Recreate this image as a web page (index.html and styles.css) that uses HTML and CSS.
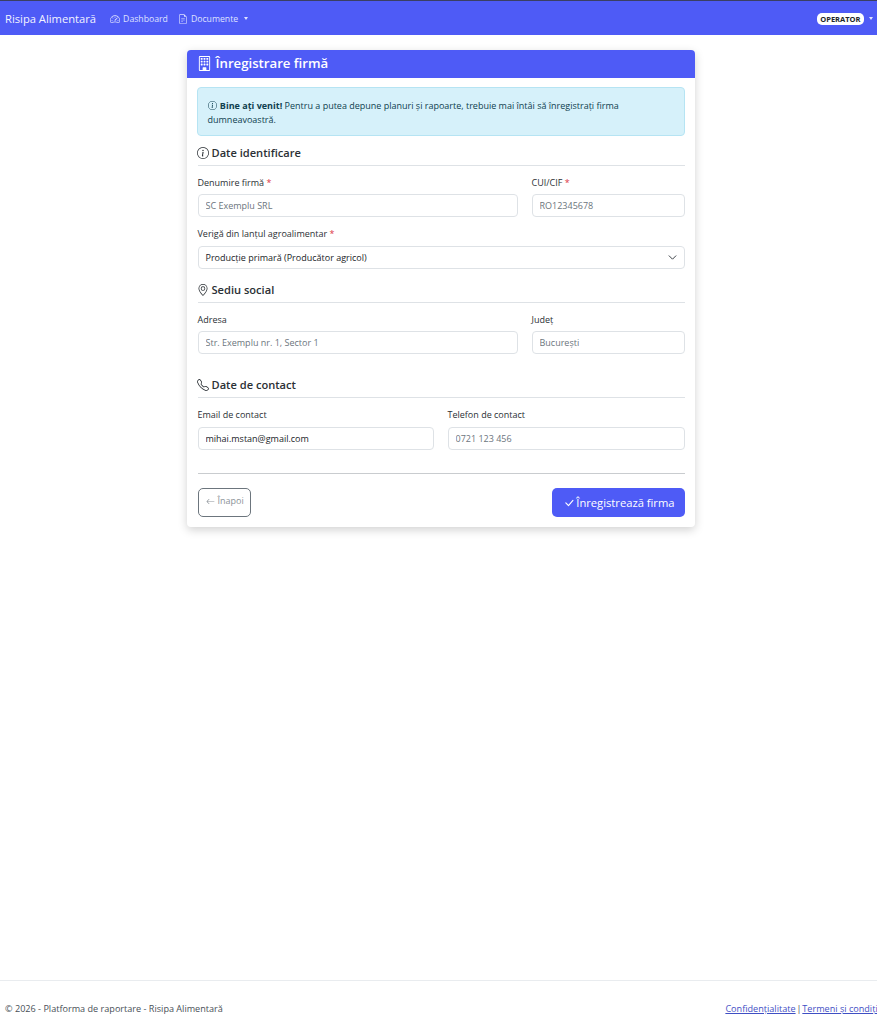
FILE: index.html
```html
<!DOCTYPE html>
<html lang="ro">
<head>
    <meta charset="UTF-8">
    <meta name="viewport" content="width=device-width, initial-scale=1.0">
    <title>Înregistrare firmă</title>
    <link rel="stylesheet" href="styles.css">
</head>
<body>
    <nav class="navbar">
        <a class="brand" href="#">Risipa Alimentară</a>
        <a class="nav-link" href="#">
            <svg class="nav-icon" viewBox="0 0 16 16" fill="currentColor"><path d="M8 4a.5.5 0 0 1 .5.5V6a.5.5 0 0 1-1 0V4.5A.5.5 0 0 1 8 4M3.732 5.732a.5.5 0 0 1 .707 0l.915.914a.5.5 0 1 1-.708.708l-.914-.915a.5.5 0 0 1 0-.707M2 10a.5.5 0 0 1 .5-.5h1.586a.5.5 0 0 1 0 1H2.5A.5.5 0 0 1 2 10m9.5 0a.5.5 0 0 1 .5-.5h1.5a.5.5 0 0 1 0 1H12a.5.5 0 0 1-.5-.5m.754-4.246a.39.39 0 0 0-.527-.02L7.547 9.31a.91.91 0 1 0 1.302 1.258l3.434-4.297a.39.39 0 0 0-.029-.518z"/><path fill-rule="evenodd" d="M0 10a8 8 0 1 1 15.547 2.661c-.442 1.253-1.845 1.602-2.932 1.25C11.309 13.488 9.475 13 8 13c-1.474 0-3.31.488-4.615.911-1.087.352-2.49.003-2.932-1.25A8 8 0 0 1 0 10m8-7a7 7 0 0 0-6.603 9.329c.203.575.923.876 1.68.63C4.397 12.533 6.358 12 8 12s3.604.532 4.923.96c.757.245 1.477-.056 1.68-.631A7 7 0 0 0 8 3"/></svg>
            Dashboard
        </a>
        <a class="nav-link" href="#">
            <svg class="nav-icon" viewBox="0 0 16 16" fill="currentColor"><path d="M5.5 7a.5.5 0 0 0 0 1h5a.5.5 0 0 0 0-1zM5 9.5a.5.5 0 0 1 .5-.5h5a.5.5 0 0 1 0 1h-5a.5.5 0 0 1-.5-.5m0 2a.5.5 0 0 1 .5-.5h2a.5.5 0 0 1 0 1h-2a.5.5 0 0 1-.5-.5"/><path d="M9.5 0H4a2 2 0 0 0-2 2v12a2 2 0 0 0 2 2h8a2 2 0 0 0 2-2V4.5zm0 1v2A1.5 1.5 0 0 0 11 4.5h2V14a1 1 0 0 1-1 1H4a1 1 0 0 1-1-1V2a1 1 0 0 1 1-1z"/></svg>
            Documente
            <span class="caret"></span>
        </a>
        <div class="nav-user">
            <span class="role-badge">OPERATOR</span>
            <span class="caret"></span>
        </div>
    </nav>

    <main class="page">
        <section class="card">
            <h1 class="card-header">
                <svg class="header-icon" viewBox="0 0 16 16" fill="currentColor"><path d="M4 2.5a.5.5 0 0 1 .5-.5h1a.5.5 0 0 1 .5.5v1a.5.5 0 0 1-.5.5h-1a.5.5 0 0 1-.5-.5zm3 0a.5.5 0 0 1 .5-.5h1a.5.5 0 0 1 .5.5v1a.5.5 0 0 1-.5.5h-1a.5.5 0 0 1-.5-.5zm3.5-.5a.5.5 0 0 0-.5.5v1a.5.5 0 0 0 .5.5h1a.5.5 0 0 0 .5-.5v-1a.5.5 0 0 0-.5-.5zM4 5.5a.5.5 0 0 1 .5-.5h1a.5.5 0 0 1 .5.5v1a.5.5 0 0 1-.5.5h-1a.5.5 0 0 1-.5-.5zM7.5 5a.5.5 0 0 0-.5.5v1a.5.5 0 0 0 .5.5h1a.5.5 0 0 0 .5-.5v-1a.5.5 0 0 0-.5-.5zm2.5.5a.5.5 0 0 1 .5-.5h1a.5.5 0 0 1 .5.5v1a.5.5 0 0 1-.5.5h-1a.5.5 0 0 1-.5-.5zM4.5 8a.5.5 0 0 0-.5.5v1a.5.5 0 0 0 .5.5h1a.5.5 0 0 0 .5-.5v-1a.5.5 0 0 0-.5-.5zm2.5.5a.5.5 0 0 1 .5-.5h1a.5.5 0 0 1 .5.5v1a.5.5 0 0 1-.5.5h-1a.5.5 0 0 1-.5-.5zm3.5-.5a.5.5 0 0 0-.5.5v1a.5.5 0 0 0 .5.5h1a.5.5 0 0 0 .5-.5v-1a.5.5 0 0 0-.5-.5z"/><path d="M2 1a1 1 0 0 1 1-1h10a1 1 0 0 1 1 1v14a1 1 0 0 1-1 1H3a1 1 0 0 1-1-1zm11 0H3v14h3v-2.5a.5.5 0 0 1 .5-.5h3a.5.5 0 0 1 .5.5V15h3z"/></svg>
                Înregistrare firmă
            </h1>
            <div class="card-body">
                <div class="alert">
                    <p class="alert-text"><svg class="alert-icon" viewBox="0 0 16 16" fill="currentColor"><path d="M8 15A7 7 0 1 1 8 1a7 7 0 0 1 0 14m0 1A8 8 0 1 0 8 0a8 8 0 0 0 0 16"/><path d="m8.93 6.588-2.29.287-.082.38.45.083c.294.07.352.176.288.469l-.738 3.468c-.194.897.105 1.319.808 1.319.545 0 1.178-.252 1.465-.598l.088-.416c-.2.176-.492.246-.686.246-.275 0-.375-.193-.304-.533zM9 4.5a1 1 0 1 1-2 0 1 1 0 0 1 2 0"/></svg> <strong>Bine ați venit!</strong> Pentru a putea depune planuri și rapoarte, trebuie mai întâi să înregistrați firma dumneavoastră.</p>
                </div>

                <h2 class="section-title">
                    <svg class="section-icon" viewBox="0 0 16 16" fill="currentColor"><path d="M8 15A7 7 0 1 1 8 1a7 7 0 0 1 0 14m0 1A8 8 0 1 0 8 0a8 8 0 0 0 0 16"/><path d="m8.93 6.588-2.29.287-.082.38.45.083c.294.07.352.176.288.469l-.738 3.468c-.194.897.105 1.319.808 1.319.545 0 1.178-.252 1.465-.598l.088-.416c-.2.176-.492.246-.686.246-.275 0-.375-.193-.304-.533zM9 4.5a1 1 0 1 1-2 0 1 1 0 0 1 2 0"/></svg>
                    Date identificare
                </h2>
                <div class="form-row wide-narrow">
                    <div class="field">
                        <label>Denumire firmă <span class="required">*</span></label>
                        <input class="control" type="text" placeholder="SC Exemplu SRL">
                    </div>
                    <div class="field">
                        <label>CUI/CIF <span class="required">*</span></label>
                        <input class="control" type="text" placeholder="RO12345678">
                    </div>
                </div>
                <div class="field field-full">
                    <label>Verigă din lanțul agroalimentar <span class="required">*</span></label>
                    <div class="control select-control">
                        Producție primară (Producător agricol)
                        <svg class="chevron" viewBox="0 0 16 16"><path fill="none" stroke="#343a40" stroke-linecap="round" stroke-linejoin="round" stroke-width="1.7" d="m2 5 6 6 6-6"/></svg>
                    </div>
                </div>

                <h2 class="section-title">
                    <svg class="section-icon" viewBox="0 0 16 16" fill="currentColor"><path d="M12.166 8.94c-.524 1.062-1.234 2.12-1.96 3.07A32 32 0 0 1 8 14.58a32 32 0 0 1-2.206-2.57c-.726-.95-1.436-2.008-1.96-3.07C3.304 7.867 3 6.862 3 6a5 5 0 0 1 10 0c0 .862-.305 1.867-.834 2.94M8 16s6-5.686 6-10A6 6 0 0 0 2 6c0 4.314 6 10 6 10"/><path d="M8 8a2 2 0 1 1 0-4 2 2 0 0 1 0 4m0 1a3 3 0 1 0 0-6 3 3 0 0 0 0 6"/></svg>
                    Sediu social
                </h2>
                <div class="form-row wide-narrow">
                    <div class="field">
                        <label>Adresa</label>
                        <input class="control" type="text" placeholder="Str. Exemplu nr. 1, Sector 1">
                    </div>
                    <div class="field">
                        <label>Județ</label>
                        <input class="control" type="text" placeholder="București">
                    </div>
                </div>

                <h2 class="section-title section-contact">
                    <svg class="section-icon" viewBox="0 0 16 16" fill="currentColor"><path d="M3.654 1.328a.678.678 0 0 0-1.015-.063L1.605 2.3c-.483.484-.661 1.169-.45 1.77a17.6 17.6 0 0 0 4.168 6.608 17.6 17.6 0 0 0 6.608 4.168c.601.211 1.286.033 1.77-.45l1.034-1.034a.678.678 0 0 0-.063-1.015l-2.307-1.794a.68.68 0 0 0-.58-.122l-2.19.547a1.75 1.75 0 0 1-1.657-.459L5.482 8.062a1.75 1.75 0 0 1-.46-1.657l.548-2.19a.68.68 0 0 0-.122-.58zM1.884.511a1.745 1.745 0 0 1 2.612.163L6.29 2.98c.329.423.445.974.315 1.494l-.547 2.19a.68.68 0 0 0 .178.643l2.457 2.457a.68.68 0 0 0 .644.178l2.189-.547a1.75 1.75 0 0 1 1.494.315l2.306 1.794c.829.645.905 1.87.163 2.611l-1.034 1.034c-.74.74-1.846 1.065-2.877.702a18.6 18.6 0 0 1-7.01-4.42 18.6 18.6 0 0 1-4.42-7.009c-.362-1.03-.037-2.137.703-2.877z"/></svg>
                    Date de contact
                </h2>
                <div class="form-row half-half">
                    <div class="field">
                        <label>Email de contact</label>
                        <input class="control filled" type="text" value="mihai.mstan@gmail.com">
                    </div>
                    <div class="field">
                        <label>Telefon de contact</label>
                        <input class="control" type="text" placeholder="0721 123 456">
                    </div>
                </div>

                <hr class="divider">

                <div class="form-actions">
                    <a class="btn btn-back" href="#">
                        <svg class="btn-icon" viewBox="0 0 16 16" fill="currentColor"><path fill-rule="evenodd" d="M15 8a.5.5 0 0 0-.5-.5H2.707l3.147-3.146a.5.5 0 1 0-.708-.708l-4 4a.5.5 0 0 0 0 .708l4 4a.5.5 0 0 0 .708-.708L2.707 8.5H14.5A.5.5 0 0 0 15 8"/></svg>
                        Înapoi
                    </a>
                    <button class="btn btn-submit" type="button">
                        <svg class="btn-icon" viewBox="0 0 16 16" fill="currentColor"><path d="M12.736 3.97a.733.733 0 0 1 1.047 0c.286.289.29.756.01 1.05L7.88 12.01a.733.733 0 0 1-1.065.02L3.217 8.384a.757.757 0 0 1 0-1.06.733.733 0 0 1 1.047 0l3.052 3.093 5.4-6.425z"/></svg>
                        Înregistrează firma
                    </button>
                </div>
            </div>
        </section>
    </main>

    <footer class="footer">
        <span>© 2026 - Platforma de raportare - Risipa Alimentară</span>
        <span class="footer-links"><a href="#">Confidențialitate</a> | <a href="#">Termeni și condiții</a></span>
    </footer>
</body>
</html>
```
FILE: styles.css
```css
* {
    box-sizing: border-box;
}

html, body {
    height: 100%;
}

body {
    margin: 0;
    display: flex;
    flex-direction: column;
    height: 1024px;
    overflow: hidden;
    font-family: "Open Sans", "Noto Sans", sans-serif;
    font-size: 9px;
    color: #212529;
    background: white;
}

a {
    text-decoration: none;
}

/* navbar */
.navbar {
    display: flex;
    align-items: center;
    height: 35px;
    padding: 1px 4px 0 5px;
    background: #4e5bf6;
    border-top: 1px solid #3a3f63;
    color: white;
    white-space: nowrap;
}

.brand {
    font-size: 11.2px;
    color: #f2f3ff;
    margin-right: 14px;
}

.nav-link {
    display: flex;
    align-items: center;
    gap: 3px;
    font-size: 8.7px;
    color: #dfe2ff;
    margin-right: 10px;
}

.nav-icon {
    width: 10px;
    height: 10px;
}

.caret {
    display: inline-block;
    width: 0;
    height: 0;
    margin-left: 3px;
    border-top: 3px solid currentColor;
    border-left: 2.5px solid transparent;
    border-right: 2.5px solid transparent;
}

.nav-user {
    display: flex;
    align-items: center;
    gap: 2px;
    margin-left: auto;
    color: #dfe2ff;
}

.role-badge {
    padding: 1px 3.5px;
    background: white;
    color: #212529;
    border-radius: 5px;
    font-size: 7.5px;
    font-weight: 700;
    line-height: 10px;
}

/* card */
.page {
    flex: 1;
    padding: 15px 0 0 4px;
}

.card {
    width: 508px;
    margin: 0 auto;
    background: white;
    border-radius: 4px;
    box-shadow: 0 3px 10px rgba(0,0,0,0.18);
    overflow: hidden;
}

.card-header {
    display: flex;
    align-items: center;
    gap: 4px;
    height: 28px;
    margin: 0;
    padding: 0 10px 2px;
    background: #4e5bf6;
    color: white;
    font-size: 13.2px;
    font-weight: 600;
}

.header-icon {
    width: 15px;
    height: 15px;
}

.card-body {
    padding: 9px 10px 10px 11px;
}

.alert {
    height: 49px;
    padding: 11px 9px 0 10px;
    margin: 0 0 10px -1px;
    background: #d6f1fa;
    border: 1px solid #b6e4f3;
    border-radius: 4px;
    color: #0f3f4f;
}

.alert-text {
    margin: 0;
    line-height: 14px;
}

.alert-icon {
    width: 9px;
    height: 9px;
    margin-right: 1px;
    vertical-align: -1px;
}

.section-title {
    display: flex;
    align-items: center;
    gap: 3px;
    height: 20px;
    margin: 0 0 12px;
    border-bottom: 1px solid #dee2e6;
    padding-bottom: 6px;
    font-size: 11.1px;
    font-weight: 600;
    color: #2b3035;
}

.section-icon {
    width: 12px;
    height: 12px;
    margin-left: -1px;
}

.section-contact {
    margin-top: 24px;
}

.form-row {
    display: grid;
    gap: 14px;
}

.wide-narrow {
    grid-template-columns: 320px 153px;
}

.half-half {
    grid-template-columns: 236px 237px;
}

.field {
    display: flex;
    flex-direction: column;
}

.field-full {
    margin: 12px 0 14px;
}

.field label {
    height: 12px;
    margin-bottom: 4px;
    font-size: 9px;
    line-height: 10px;
    color: #2b3035;
}

.field-full label,
.half-half .field label {
    margin-bottom: 5px;
}

.required {
    color: #dc3545;
}

.control {
    width: 100%;
    height: 23px;
    padding: 0 7px;
    background: white;
    border: 1px solid #dee2e6;
    border-radius: 4px;
    font-family: inherit;
    font-size: 9px;
    color: #212529;
}

.control::placeholder {
    color: #6c757d;
}

.select-control {
    display: flex;
    align-items: center;
    justify-content: space-between;
}

.chevron {
    width: 9px;
    height: 9px;
}

.divider {
    height: 1px;
    margin: 23px 0 14px;
    border: 0;
    background: #c9cccf;
}

.form-actions {
    display: flex;
    align-items: center;
    justify-content: space-between;
}

.btn {
    display: flex;
    align-items: center;
    height: 29px;
    border-radius: 5px;
    font-family: inherit;
}

.btn-back {
    align-items: flex-start;
    gap: 3px;
    padding: 5px 6px 0 7px;
    border: 1px solid #6c757d;
    font-size: 9px;
    color: #8b9298;
}

.btn-back .btn-icon {
    width: 9px;
    height: 9px;
    margin-top: 3px;
}

.btn-submit {
    gap: 1px;
    padding: 0 10px 0 11px;
    background: #4e5bf6;
    border: 0;
    font-size: 11.2px;
    color: white;
}

.btn-submit .btn-icon {
    width: 12px;
    height: 12px;
}

/* footer */
.footer {
    display: flex;
    align-items: center;
    justify-content: space-between;
    height: 44px;
    padding: 12px 5px 0;
    border-top: 1px solid #e9ecef;
    font-size: 9.1px;
    color: #495057;
    white-space: nowrap;
}

.footer-links {
    margin-right: -8px;
    word-spacing: -1.5px;
}

.footer-links a {
    color: #3f4fc4;
    text-decoration: underline;
    word-spacing: 0;
}
```
